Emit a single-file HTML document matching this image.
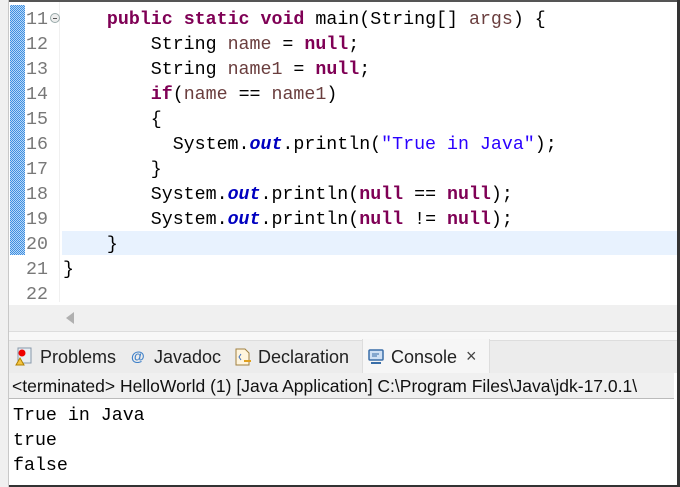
<!DOCTYPE html>
<html><head><meta charset="utf-8"><style>
*{margin:0;padding:0;box-sizing:border-box}
body{width:680px;height:487px;overflow:hidden;background:#fff;position:relative;font-family:"Liberation Sans",sans-serif}
.mono{font-family:"Liberation Mono",monospace;font-size:18.3px;white-space:pre;position:absolute;line-height:25px}
.ln{color:#787878;left:26px}
.kw{color:#7f0055;font-weight:bold}
.v{color:#6a3e3e}
.f{color:#0000c0;font-weight:bold;font-style:italic}
.s{color:#2a00ff}
</style></head><body>
<div style="position:absolute;left:0;top:0;width:680px;height:2px;background:#555"></div>
<div style="position:absolute;right:0;top:0;width:3px;height:487px;background:#333"></div>
<div style="position:absolute;left:0;bottom:0;width:680px;height:2px;background:#333"></div>
<div style="position:absolute;left:0;top:0;width:9px;height:487px;background:#f0f0f0;border-right:1px solid #c8c8c8"></div>
<div style="position:absolute;left:9px;top:2px;width:668px;height:330px;background:#fff"></div>
<div style="position:absolute;left:10px;top:5px;width:15px;height:250px;background:repeating-conic-gradient(#3f8fe0 0 25%,#b8d8f8 0 50%) 0 0/2px 2px"></div>
<div style="position:absolute;left:59px;top:2px;width:1px;height:300px;background:#f0f0f0"></div>
<div style="position:absolute;left:62px;top:231px;width:615px;height:24px;background:#e8f2fe"></div>
<div style="position:absolute;left:50px;top:13px;width:10px;height:10px;border:1px solid #9aa;border-radius:50%;background:#eee"></div>
<div style="position:absolute;left:53px;top:17.5px;width:4px;height:1px;background:#555"></div>
<div class="mono ln" style="top:8px">11</div>
<div class="mono ln" style="top:33px">12</div>
<div class="mono ln" style="top:58px">13</div>
<div class="mono ln" style="top:83px">14</div>
<div class="mono ln" style="top:108px">15</div>
<div class="mono ln" style="top:133px">16</div>
<div class="mono ln" style="top:158px">17</div>
<div class="mono ln" style="top:183px">18</div>
<div class="mono ln" style="top:208px">19</div>
<div class="mono ln" style="top:233px">20</div>
<div class="mono ln" style="top:258px">21</div>
<div class="mono ln" style="top:283px">22</div>
<div class="mono" style="left:63px;top:8px;color:#000">    <span class="kw">public</span> <span class="kw">static</span> <span class="kw">void</span> main(String[] <span class="v">args</span>) {
        String <span class="v">name</span> = <span class="kw">null</span>;
        String <span class="v">name1</span> = <span class="kw">null</span>;
        <span class="kw">if</span>(<span class="v">name</span> == <span class="v">name1</span>)
        {
          System.<span class="f">out</span>.println(<span class="s">"True in Java"</span>);
        }
        System.<span class="f">out</span>.println(<span class="kw">null</span> == <span class="kw">null</span>);
        System.<span class="f">out</span>.println(<span class="kw">null</span> != <span class="kw">null</span>);
    }
}
</div>
<div style="position:absolute;left:9px;top:305px;width:668px;height:27px;background:#f0f0f0;border-bottom:1px solid #ddd"></div>
<div style="position:absolute;left:66px;top:312px;width:0;height:0;border-top:6px solid transparent;border-bottom:6px solid transparent;border-right:8px solid #b0b0b0"></div>
<div style="position:absolute;left:9px;top:332px;width:668px;height:8px;background:#f8f8f8"></div>
<div style="position:absolute;left:9px;top:340px;width:668px;height:33px;background:#ececec;border-top:1px solid #ddd"></div>
<div style="position:absolute;left:362px;top:339px;width:128px;height:34px;background:#f6f6f6;border-left:1px solid #ddd;border-right:1px solid #ddd"></div>
<div style="position:absolute;left:14px;top:347px;width:20px;height:20px">
<svg width="20" height="20"><rect x="4" y="1" width="13" height="15" fill="#e8eef4" stroke="#8899aa"/><circle cx="8" cy="6" r="3.5" fill="#e00"/><path d="M2 18 L6 11 L10 18Z" fill="#f5c542" stroke="#b08000"/></svg></div>
<div style="position:absolute;left:40px;top:347px;font-size:18px;color:#222">Problems</div>
<div style="position:absolute;left:131px;top:348px;font-size:14px;color:#3c7fc8;font-weight:bold">@</div>
<div style="position:absolute;left:154px;top:347px;font-size:18px;color:#222">Javadoc</div>
<div style="position:absolute;left:233px;top:347px;width:20px;height:20px">
<svg width="20" height="20"><path d="M3 2h9l4 4v12H3z" fill="#fff5dd" stroke="#a08040"/><path d="M8 7 L6 10 L8 13" fill="none" stroke="#4070c0"/><path d="M11 14h7" stroke="#e0a020" stroke-width="2"/></svg></div>
<div style="position:absolute;left:258px;top:347px;font-size:18px;color:#222">Declaration</div>
<div style="position:absolute;left:368px;top:349px;width:17px;height:15px">
<svg width="17" height="16"><rect x="1" y="1" width="14" height="10" rx="1" fill="#cfe0f4" stroke="#3a6ea8" stroke-width="1.5"/><path d="M4 5h7M4 7h5" stroke="#3a6ea8"/><path d="M3 14h10" stroke="#3a6ea8" stroke-width="2"/></svg></div>
<div style="position:absolute;left:391px;top:347px;font-size:18px;color:#222">Console</div>
<div style="position:absolute;left:466px;top:346px;font-size:18px;color:#444">×</div>
<div style="position:absolute;left:9px;top:373px;width:668px;height:26px;background:#f0f0f0;border-bottom:1px solid #bbb"></div>
<div style="position:absolute;left:12px;top:376px;font-size:17.5px;color:#111;white-space:nowrap">&lt;terminated&gt; HelloWorld (1) [Java Application] C:\Program Files\Java\jdk-17.0.1\</div>
<div style="position:absolute;left:674px;top:373px;width:3px;height:27px;background:#fff"></div>
<div class="mono" style="left:13px;top:404px;color:#000">True in Java
true
false</div>
</body></html>
